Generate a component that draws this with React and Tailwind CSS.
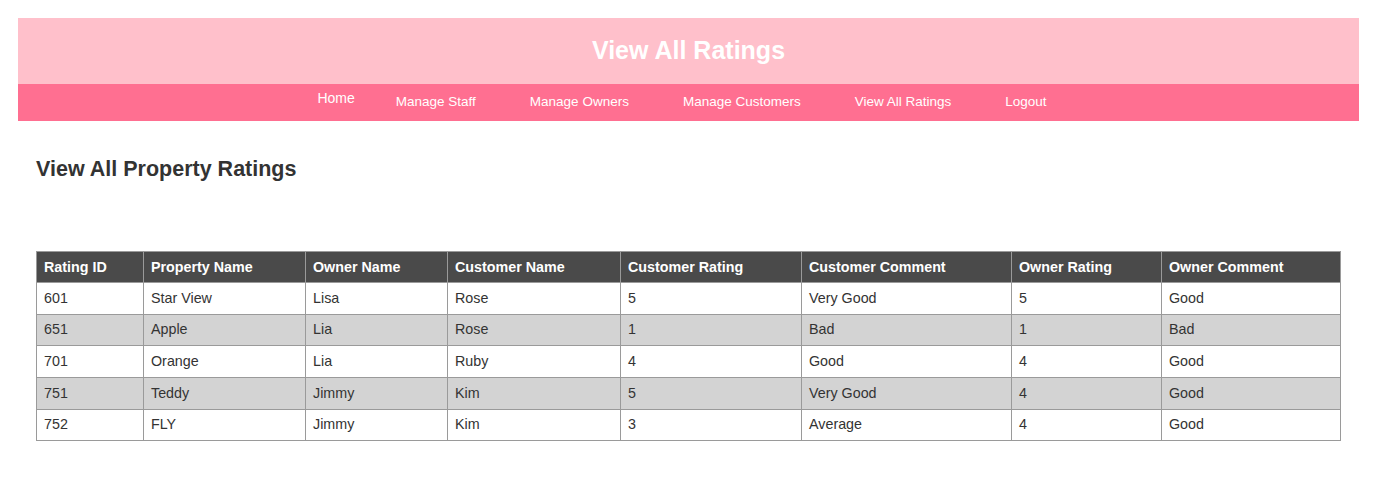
const ratings = [
  { id: '601', property: 'Star View', owner: 'Lisa', customer: 'Rose', cRating: '5', cComment: 'Very Good', oRating: '5', oComment: 'Good' },
  { id: '651', property: 'Apple', owner: 'Lia', customer: 'Rose', cRating: '1', cComment: 'Bad', oRating: '1', oComment: 'Bad' },
  { id: '701', property: 'Orange', owner: 'Lia', customer: 'Ruby', cRating: '4', cComment: 'Good', oRating: '4', oComment: 'Good' },
  { id: '751', property: 'Teddy', owner: 'Jimmy', customer: 'Kim', cRating: '5', cComment: 'Very Good', oRating: '4', oComment: 'Good' },
  { id: '752', property: 'FLY', owner: 'Jimmy', customer: 'Kim', cRating: '3', cComment: 'Average', oRating: '4', oComment: 'Good' },
];

const columns = [
  { label: 'Rating ID', width: 'w-[107px]' },
  { label: 'Property Name', width: 'w-[162px]' },
  { label: 'Owner Name', width: 'w-[142px]' },
  { label: 'Customer Name', width: 'w-[173px]' },
  { label: 'Customer Rating', width: 'w-[181px]' },
  { label: 'Customer Comment', width: 'w-[210px]' },
  { label: 'Owner Rating', width: 'w-[150px]' },
  { label: 'Owner Comment', width: 'w-[179px]' },
];

const navLinks = ['Manage Staff', 'Manage Owners', 'Manage Customers', 'View All Ratings', 'Logout'];

const App = () => {
  return (
    <div className="min-h-[480px] bg-white p-[18px] font-['Liberation_Sans',Arial,sans-serif]">
      {/* Header */}
      <header>
        <div className="h-[66px] bg-[#ffc0cb] flex items-center justify-center">
          <h1 className="text-white text-[25px] font-bold">View All Ratings</h1>
        </div>
        <nav className="h-[37px] bg-[#ff6f91] flex items-center justify-center pr-[13px] text-white text-[13.5px]">
          <a href="#" className="mb-[8px] mr-[41px] text-[14px]">Home</a>
          {navLinks.map((link, i) => (
            <a key={link} href="#" className={i < navLinks.length - 1 ? 'mr-[54px]' : ''}>
              {link}
            </a>
          ))}
        </nav>
      </header>

      {/* Content */}
      <main className="px-[18px]">
        <h2 className="mt-[32px] text-[21.5px] font-bold text-[#333]">View All Property Ratings</h2>

        <table className="mt-[66px] w-[1304px] table-fixed border-collapse text-[14.3px] text-[#333]">
          <thead>
            <tr className="bg-[#4a4a4a] text-white h-[31px]">
              {columns.map(col => (
                <th key={col.label} className={`${col.width} border border-[#9a9a9a] px-[7px] text-left font-bold`}>
                  {col.label}
                </th>
              ))}
            </tr>
          </thead>
          <tbody>
            {ratings.map((r, i) => (
              <tr key={r.id} className={`h-[31.6px] ${i % 2 === 1 ? 'bg-[#d3d3d3]' : 'bg-white'}`}>
                {[r.id, r.property, r.owner, r.customer, r.cRating, r.cComment, r.oRating, r.oComment].map((v, j) => (
                  <td key={j} className="border border-[#9a9a9a] px-[7px]">{v}</td>
                ))}
              </tr>
            ))}
          </tbody>
        </table>
      </main>
    </div>
  );
};

export default App;
